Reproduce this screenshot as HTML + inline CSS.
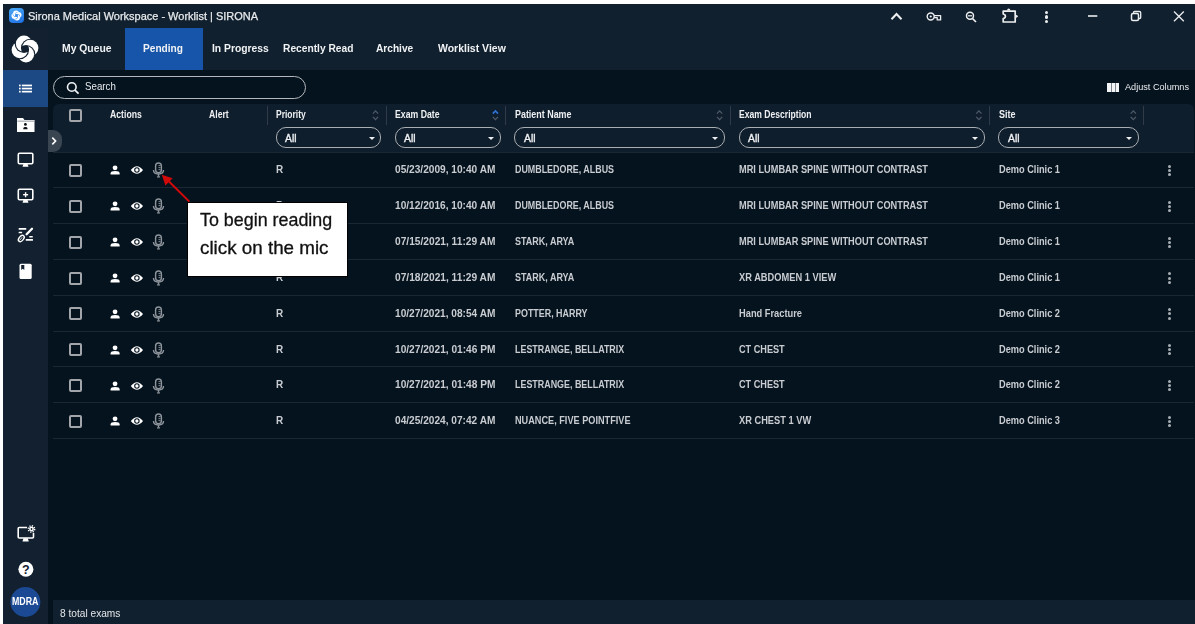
<!DOCTYPE html>
<html><head><meta charset="utf-8">
<style>
*{box-sizing:border-box;margin:0;padding:0}
html,body{width:1195px;height:624px;overflow:hidden;background:#ffffff;font-family:"Liberation Sans",sans-serif}
.a{position:absolute}
.t{position:absolute;white-space:nowrap;transform-origin:0 0;font-family:"Liberation Sans",sans-serif}
.cb{position:absolute;width:13px;height:13px;border:2px solid #a2a6ab;border-radius:2px}
.sep{position:absolute;top:106px;width:1.2px;height:19px;background:#303b47}
.pill{position:absolute;top:127.4px;height:20.8px;border:1.2px solid #a9aeb3;border-radius:10px}
.caret{position:absolute;top:137px;width:0;height:0;border-left:3px solid transparent;border-right:3px solid transparent;border-top:3px solid #eef0f2}
.div{position:absolute;left:53px;width:1141px;height:1px;background:#1b2734}
.kb{position:absolute;width:3px;height:3px;border-radius:50%;background:#a9aeb4}
</style></head><body>
<!-- app background -->
<div class="a" style="left:3px;top:4px;width:1192px;height:620px;background:#10202e"></div>
<!-- sidebar -->
<div class="a" style="left:3px;top:28px;width:45px;height:596px;background:#12202f"></div>
<!-- main -->
<div class="a" style="left:48px;top:70px;width:1147px;height:554px;background:#05131f"></div>
<!-- pending tab -->
<div class="a" style="left:125px;top:28px;width:78px;height:42px;background:#1755aa"></div>
<!-- sidebar active -->
<div class="a" style="left:3px;top:70px;width:45px;height:37px;background:#1c4984"></div>

<!-- title icon -->
<div class="a" style="left:8.5px;top:8.2px;width:15.2px;height:15.3px;border-radius:4px;background:linear-gradient(160deg,#4aaaf7,#1d6ee2)"></div>
<svg class="a" style="left:8.6px;top:8.4px" width="15" height="15" viewBox="0 0 28 28">
 <g fill="#fff" transform="translate(14 14) scale(0.7) translate(-14 -14)">
  <use href="#lp"/><use href="#lp" transform="rotate(90 14 14)"/><use href="#lp" transform="rotate(180 14 14)"/><use href="#lp" transform="rotate(270 14 14)"/>
 </g>
</svg>

<!-- nav logo -->
<svg class="a" style="left:11.4px;top:34.9px" width="28" height="28" viewBox="0 0 28 28">
 <defs>
  <mask id="lm" maskUnits="userSpaceOnUse" x="-10" y="-10" width="48" height="48"><rect x="-10" y="-10" width="48" height="48" fill="#fff"/><circle cx="19.25" cy="12.98" r="9.30" fill="#000"/></mask>
  <g id="lp"><circle cx="12.98" cy="8.75" r="8.15" mask="url(#lm)"/></g>
 </defs>
 <g fill="#fff">
  <use href="#lp"/><use href="#lp" transform="rotate(90 14 14)"/><use href="#lp" transform="rotate(180 14 14)"/><use href="#lp" transform="rotate(270 14 14)"/>
 </g>
</svg>

<!-- titlebar right icons -->
<svg class="a" style="left:880px;top:4px" width="315" height="24" viewBox="880 4 315 24" fill="none" stroke="#eceef0" stroke-width="1.8">
 <polyline points="891.5,19.3 896.5,14 901.5,19.3" stroke-width="2"/>
 <circle cx="930.7" cy="16.5" r="3.5" stroke-width="1.4"/><circle cx="930.7" cy="16.5" r="1.1" fill="#eceef0" stroke="none"/>
 <path d="M934,15.6 H940.6 V19.9 H937.2 V17.6 H934" stroke-width="1.3" stroke-linejoin="round"/>
 <circle cx="970" cy="15.8" r="3.5" stroke-width="1.5"/>
 <line x1="968" y1="15.8" x2="972" y2="15.8" stroke-width="1.2"/>
 <line x1="972.6" y1="18.6" x2="976" y2="22" stroke-width="1.6"/>
 <path d="M1003.2,11.1 H1015.2 V22 H1003.2 V18.6 Q1005.4,18.1 1005.4,16.3 Q1005.4,14.5 1003.2,14 Z" stroke-width="1.7" stroke-linejoin="round"/><path d="M1006.9,10.6 Q1007.3,8.4 1008.7,8.4 Q1010.1,8.4 1010.5,10.6 Z" fill="#eceef0" stroke="none"/><path d="M1015.6,14.7 Q1017.7,15.1 1017.7,16.35 Q1017.7,17.6 1015.6,18 Z" fill="#eceef0" stroke="none"/>
 <line x1="1088" y1="16" x2="1097.3" y2="16" stroke-width="1.6"/>
 <rect x="1131.5" y="13.5" width="7" height="7" rx="1.5" stroke-width="1.5"/>
 <path d="M1133.5,13 V12.5 Q1133.5,11.5 1134.5,11.5 H1139.5 Q1140.7,11.5 1140.7,12.7 V17.5 Q1140.7,18.5 1139.7,18.5 H1139" stroke-width="1.3"/>
 <line x1="1174" y1="11.5" x2="1183.8" y2="21.2" stroke-width="1.3"/>
 <line x1="1183.8" y1="11.5" x2="1174" y2="21.2" stroke-width="1.3"/>
</svg>
<div class="a" style="left:1044.8px;top:10.6px;width:3.3px;height:3.3px;border-radius:50%;background:#eceef0"></div>
<div class="a" style="left:1044.8px;top:15.3px;width:3.3px;height:3.3px;border-radius:50%;background:#eceef0"></div>
<div class="a" style="left:1044.8px;top:20px;width:3.3px;height:3.3px;border-radius:50%;background:#eceef0"></div>

<!-- sidebar icons -->
<svg class="a" style="left:3px;top:70px" width="45" height="554" viewBox="3 70 45 554">
 <g fill="#ffffff">
  <!-- list -->
  <rect x="19" y="84.6" width="1.7" height="1.7"/><rect x="21.8" y="84.6" width="10.2" height="1.7"/>
  <rect x="19" y="87.7" width="1.7" height="1.7"/><rect x="21.8" y="87.7" width="10.2" height="1.7"/>
  <rect x="19" y="90.8" width="1.7" height="1.7"/><rect x="21.8" y="90.8" width="10.2" height="1.7"/>
  <!-- folder person -->
  <path d="M17,118 H23 L24.5,120 H34.5 V132 H17 Z"/>
  <rect x="17.3" y="120.6" width="17" height="1.1" fill="#9ea4aa"/>
  <circle cx="25.4" cy="124.4" r="1.4" fill="#0a0f14"/>
  <path d="M23.3,129.2 V128.4 Q23.3,127.1 25.4,127.1 Q27.5,127.1 27.5,128.4 V129.2 Z" fill="#0a0f14"/>
  <!-- monitor -->
  <rect x="18.3" y="153.3" width="14.5" height="10.5" rx="1.2" fill="none" stroke="#fff" stroke-width="1.6"/>
  <path d="M23.5,164 H27.5 L28.5,166.8 H22.5 Z"/>
  <!-- monitor plus -->
  <rect x="18.3" y="189.3" width="14.5" height="10.5" rx="1.2" fill="none" stroke="#fff" stroke-width="1.6"/>
  <path d="M23.5,200 H27.5 L28.5,202.8 H22.5 Z"/>
  <rect x="24.9" y="192.2" width="1.4" height="5"/><rect x="23.1" y="194" width="5" height="1.4"/>
  <!-- edit lines -->
  <rect x="18.6" y="228.1" width="7.7" height="1.6" rx="0.5"/>
  <rect x="18.6" y="231.7" width="3.5" height="1.5" rx="0.5"/>
  <rect x="29.2" y="235.9" width="3.6" height="1.5" rx="0.5"/>
  <rect x="25.7" y="239.1" width="7.3" height="1.7" rx="0.5"/>
  <line x1="32" y1="228.8" x2="26.6" y2="234.3" stroke="#fff" stroke-width="2.3" stroke-linecap="round"/>
  <ellipse cx="21.3" cy="238.5" rx="2.2" ry="3.6" transform="rotate(40 21.3 238.5)" fill="none" stroke="#fff" stroke-width="1.4"/>
  <line x1="19.6" y1="240.4" x2="22.3" y2="237.2" stroke="#fff" stroke-width="0.8"/>
  <!-- book -->
  <rect x="19.5" y="263.7" width="12.2" height="15.3" rx="1.5"/>
  <path d="M21.2,265 H24.3 V270 L22.75,268.8 L21.2,270 Z" fill="#12202f"/>
  <!-- monitor settings -->
  <path d="M27,527.5 H19.2 Q18.2,527.5 18.2,528.5 V537 Q18.2,538 19.2,538 H32.5 Q33.5,538 33.5,537 V533" fill="none" stroke="#fff" stroke-width="1.6"/>
  <path d="M23.5,538.3 H27.8 L28.8,541.5 H22.5 Z"/>
  <circle cx="31.5" cy="529" r="2.4"/>
  <circle cx="31.5" cy="529" r="3.2" fill="none" stroke="#fff" stroke-width="1.4" stroke-dasharray="1.2 1.31"/>
  <circle cx="31.5" cy="529" r="0.9" fill="#12202f"/>
  <!-- help -->
  <circle cx="25.9" cy="569.2" r="7.5"/>
 </g>
 <text x="25.9" y="573.6" font-family="Liberation Sans" font-weight="bold" font-size="12.5" fill="#12202f" text-anchor="middle">?</text>
 <circle cx="25.4" cy="602" r="15" fill="#1b4994"/>
</svg>

<!-- search pill -->
<div class="a" style="left:53px;top:76px;width:253px;height:23px;border:1.6px solid #b4b8bc;border-radius:12px"></div>
<svg class="a" style="left:60px;top:78px" width="24" height="20" viewBox="60 78 24 20" fill="none" stroke="#f0f2f4">
 <circle cx="71.8" cy="87" r="4.3" stroke-width="1.6"/>
 <line x1="74.9" y1="90.1" x2="78.6" y2="93.6" stroke-width="1.8"/>
</svg>
<!-- adjust columns icon -->
<div class="a" style="left:1106.7px;top:82.5px;width:12.6px;height:9px;background:#f2f4f6"></div>
<div class="a" style="left:1110.5px;top:82.5px;width:1px;height:9px;background:#7b838c"></div>
<div class="a" style="left:1114.6px;top:82.5px;width:1px;height:9px;background:#7b838c"></div>

<!-- header -->
<div class="a" style="left:53px;top:104px;width:1141px;height:48px;background:#0f1e2d;border-radius:6px 6px 0 0"></div>
<div class="cb" style="left:68.5px;top:109px"></div>
<div class="sep" style="left:266.8px"></div>
<div class="sep" style="left:385.8px"></div>
<div class="sep" style="left:504.8px"></div>
<div class="sep" style="left:729.6px"></div>
<div class="sep" style="left:989px"></div>
<div class="sep" style="left:1143.2px"></div>
<svg class="a" style="left:360px;top:104px" width="800" height="24" viewBox="360 104 800 24" fill="none" stroke-width="1.3">
 <g stroke="#4f5a66">
  <polyline points="372.9,113.6 375.5,110.9 378.1,113.6"/><polyline points="372.9,116.9 375.5,119.6 378.1,116.9"/>
  <polyline points="717.0,113.6 719.6,110.9 722.2,113.6"/><polyline points="717.0,116.9 719.6,119.6 722.2,116.9"/>
  <polyline points="976.3,113.6 978.9,110.9 981.5,113.6"/><polyline points="976.3,116.9 978.9,119.6 981.5,116.9"/>
  <polyline points="1130.7,113.6 1133.3,110.9 1135.9,113.6"/><polyline points="1130.7,116.9 1133.3,119.6 1135.9,116.9"/>
  <polyline points="492.8,116.9 495.4,119.6 498,116.9"/>
 </g>
 <polyline points="492.8,113.6 495.4,110.9 498,113.6" stroke="#2f72d6" stroke-width="1.6"/>
</svg>
<div class="pill" style="left:276px;width:105px"></div><div class="caret" style="left:368.5px"></div>
<div class="pill" style="left:395px;width:105.5px"></div><div class="caret" style="left:487.5px"></div>
<div class="pill" style="left:514px;width:210.5px"></div><div class="caret" style="left:711.5px"></div>
<div class="pill" style="left:738.8px;width:246px"></div><div class="caret" style="left:971.5px"></div>
<div class="pill" style="left:998px;width:140.7px"></div><div class="caret" style="left:1125.5px"></div>
<!-- expand tab -->
<div class="a" style="left:48px;top:130px;width:13.6px;height:22px;background:#3a4552;border-radius:0 9px 9px 0"></div>
<svg class="a" style="left:48px;top:130px" width="14" height="22" viewBox="48 130 14 22" fill="none" stroke="#ffffff" stroke-width="1.6">
 <polyline points="52.3,137.6 55.6,141 52.3,144.4"/>
</svg>

<!-- rows -->
<div class="div" style="top:152px"></div>
<div class="div" style="top:187px"></div>
<div class="div" style="top:223px"></div>
<div class="div" style="top:259px"></div>
<div class="div" style="top:295px"></div>
<div class="div" style="top:331px"></div>
<div class="div" style="top:366px"></div>
<div class="div" style="top:402px"></div>
<div class="div" style="top:438px"></div>
<div class="cb" style="left:68.5px;top:164.00px"></div>
<div class="kb" style="left:1168px;top:164.80px"></div><div class="kb" style="left:1168px;top:168.90px"></div><div class="kb" style="left:1168px;top:173.10px"></div>
<svg class="a" style="left:105px;top:152.40px" width="65" height="36" viewBox="105 152.4 65 36"><g fill="#ffffff"><circle cx="115.05" cy="168.2" r="2.4"/><path d="M110.6,175 V173.6 Q110.6,171.3 115.1,171.3 Q119.6,171.3 119.6,173.6 V175 Z"/><path d="M130.8,170.4 Q136.9,162.8 143,170.4 Q136.9,178 130.8,170.4 Z"/></g><circle cx="136.9" cy="170.4" r="2.2" fill="none" stroke="#05131f" stroke-width="1.1"/><g fill="none" stroke="#8e949b" stroke-width="1.4"><rect x="155.6" y="163.4" width="5.8" height="9.6" rx="2.9"/><path d="M153.5,170.5 Q153.5,174.4 158.5,174.4 Q163.5,174.4 163.5,170.5"/><line x1="158.5" y1="174.4" x2="158.5" y2="177"/></g><g stroke="#8e949b" stroke-width="0.9"><line x1="158.5" y1="166" x2="160.5" y2="166"/><line x1="158.5" y1="168" x2="160.5" y2="168"/><line x1="158.5" y1="170" x2="160.5" y2="170"/><line x1="157" y1="177.3" x2="160" y2="177.3" stroke-width="1.2"/></g></svg>
<div class="cb" style="left:68.5px;top:199.87px"></div>
<div class="kb" style="left:1168px;top:200.67px"></div><div class="kb" style="left:1168px;top:204.77px"></div><div class="kb" style="left:1168px;top:208.97px"></div>
<svg class="a" style="left:105px;top:188.27px" width="65" height="36" viewBox="105 152.4 65 36"><g fill="#ffffff"><circle cx="115.05" cy="168.2" r="2.4"/><path d="M110.6,175 V173.6 Q110.6,171.3 115.1,171.3 Q119.6,171.3 119.6,173.6 V175 Z"/><path d="M130.8,170.4 Q136.9,162.8 143,170.4 Q136.9,178 130.8,170.4 Z"/></g><circle cx="136.9" cy="170.4" r="2.2" fill="none" stroke="#05131f" stroke-width="1.1"/><g fill="none" stroke="#8e949b" stroke-width="1.4"><rect x="155.6" y="163.4" width="5.8" height="9.6" rx="2.9"/><path d="M153.5,170.5 Q153.5,174.4 158.5,174.4 Q163.5,174.4 163.5,170.5"/><line x1="158.5" y1="174.4" x2="158.5" y2="177"/></g><g stroke="#8e949b" stroke-width="0.9"><line x1="158.5" y1="166" x2="160.5" y2="166"/><line x1="158.5" y1="168" x2="160.5" y2="168"/><line x1="158.5" y1="170" x2="160.5" y2="170"/><line x1="157" y1="177.3" x2="160" y2="177.3" stroke-width="1.2"/></g></svg>
<div class="cb" style="left:68.5px;top:235.74px"></div>
<div class="kb" style="left:1168px;top:236.54px"></div><div class="kb" style="left:1168px;top:240.64px"></div><div class="kb" style="left:1168px;top:244.84px"></div>
<svg class="a" style="left:105px;top:224.14px" width="65" height="36" viewBox="105 152.4 65 36"><g fill="#ffffff"><circle cx="115.05" cy="168.2" r="2.4"/><path d="M110.6,175 V173.6 Q110.6,171.3 115.1,171.3 Q119.6,171.3 119.6,173.6 V175 Z"/><path d="M130.8,170.4 Q136.9,162.8 143,170.4 Q136.9,178 130.8,170.4 Z"/></g><circle cx="136.9" cy="170.4" r="2.2" fill="none" stroke="#05131f" stroke-width="1.1"/><g fill="none" stroke="#8e949b" stroke-width="1.4"><rect x="155.6" y="163.4" width="5.8" height="9.6" rx="2.9"/><path d="M153.5,170.5 Q153.5,174.4 158.5,174.4 Q163.5,174.4 163.5,170.5"/><line x1="158.5" y1="174.4" x2="158.5" y2="177"/></g><g stroke="#8e949b" stroke-width="0.9"><line x1="158.5" y1="166" x2="160.5" y2="166"/><line x1="158.5" y1="168" x2="160.5" y2="168"/><line x1="158.5" y1="170" x2="160.5" y2="170"/><line x1="157" y1="177.3" x2="160" y2="177.3" stroke-width="1.2"/></g></svg>
<div class="cb" style="left:68.5px;top:271.61px"></div>
<div class="kb" style="left:1168px;top:272.41px"></div><div class="kb" style="left:1168px;top:276.51px"></div><div class="kb" style="left:1168px;top:280.71px"></div>
<svg class="a" style="left:105px;top:260.01px" width="65" height="36" viewBox="105 152.4 65 36"><g fill="#ffffff"><circle cx="115.05" cy="168.2" r="2.4"/><path d="M110.6,175 V173.6 Q110.6,171.3 115.1,171.3 Q119.6,171.3 119.6,173.6 V175 Z"/><path d="M130.8,170.4 Q136.9,162.8 143,170.4 Q136.9,178 130.8,170.4 Z"/></g><circle cx="136.9" cy="170.4" r="2.2" fill="none" stroke="#05131f" stroke-width="1.1"/><g fill="none" stroke="#8e949b" stroke-width="1.4"><rect x="155.6" y="163.4" width="5.8" height="9.6" rx="2.9"/><path d="M153.5,170.5 Q153.5,174.4 158.5,174.4 Q163.5,174.4 163.5,170.5"/><line x1="158.5" y1="174.4" x2="158.5" y2="177"/></g><g stroke="#8e949b" stroke-width="0.9"><line x1="158.5" y1="166" x2="160.5" y2="166"/><line x1="158.5" y1="168" x2="160.5" y2="168"/><line x1="158.5" y1="170" x2="160.5" y2="170"/><line x1="157" y1="177.3" x2="160" y2="177.3" stroke-width="1.2"/></g></svg>
<div class="cb" style="left:68.5px;top:307.48px"></div>
<div class="kb" style="left:1168px;top:308.28px"></div><div class="kb" style="left:1168px;top:312.38px"></div><div class="kb" style="left:1168px;top:316.58px"></div>
<svg class="a" style="left:105px;top:295.88px" width="65" height="36" viewBox="105 152.4 65 36"><g fill="#ffffff"><circle cx="115.05" cy="168.2" r="2.4"/><path d="M110.6,175 V173.6 Q110.6,171.3 115.1,171.3 Q119.6,171.3 119.6,173.6 V175 Z"/><path d="M130.8,170.4 Q136.9,162.8 143,170.4 Q136.9,178 130.8,170.4 Z"/></g><circle cx="136.9" cy="170.4" r="2.2" fill="none" stroke="#05131f" stroke-width="1.1"/><g fill="none" stroke="#8e949b" stroke-width="1.4"><rect x="155.6" y="163.4" width="5.8" height="9.6" rx="2.9"/><path d="M153.5,170.5 Q153.5,174.4 158.5,174.4 Q163.5,174.4 163.5,170.5"/><line x1="158.5" y1="174.4" x2="158.5" y2="177"/></g><g stroke="#8e949b" stroke-width="0.9"><line x1="158.5" y1="166" x2="160.5" y2="166"/><line x1="158.5" y1="168" x2="160.5" y2="168"/><line x1="158.5" y1="170" x2="160.5" y2="170"/><line x1="157" y1="177.3" x2="160" y2="177.3" stroke-width="1.2"/></g></svg>
<div class="cb" style="left:68.5px;top:343.35px"></div>
<div class="kb" style="left:1168px;top:344.15px"></div><div class="kb" style="left:1168px;top:348.25px"></div><div class="kb" style="left:1168px;top:352.45px"></div>
<svg class="a" style="left:105px;top:331.75px" width="65" height="36" viewBox="105 152.4 65 36"><g fill="#ffffff"><circle cx="115.05" cy="168.2" r="2.4"/><path d="M110.6,175 V173.6 Q110.6,171.3 115.1,171.3 Q119.6,171.3 119.6,173.6 V175 Z"/><path d="M130.8,170.4 Q136.9,162.8 143,170.4 Q136.9,178 130.8,170.4 Z"/></g><circle cx="136.9" cy="170.4" r="2.2" fill="none" stroke="#05131f" stroke-width="1.1"/><g fill="none" stroke="#8e949b" stroke-width="1.4"><rect x="155.6" y="163.4" width="5.8" height="9.6" rx="2.9"/><path d="M153.5,170.5 Q153.5,174.4 158.5,174.4 Q163.5,174.4 163.5,170.5"/><line x1="158.5" y1="174.4" x2="158.5" y2="177"/></g><g stroke="#8e949b" stroke-width="0.9"><line x1="158.5" y1="166" x2="160.5" y2="166"/><line x1="158.5" y1="168" x2="160.5" y2="168"/><line x1="158.5" y1="170" x2="160.5" y2="170"/><line x1="157" y1="177.3" x2="160" y2="177.3" stroke-width="1.2"/></g></svg>
<div class="cb" style="left:68.5px;top:379.22px"></div>
<div class="kb" style="left:1168px;top:380.02px"></div><div class="kb" style="left:1168px;top:384.12px"></div><div class="kb" style="left:1168px;top:388.32px"></div>
<svg class="a" style="left:105px;top:367.62px" width="65" height="36" viewBox="105 152.4 65 36"><g fill="#ffffff"><circle cx="115.05" cy="168.2" r="2.4"/><path d="M110.6,175 V173.6 Q110.6,171.3 115.1,171.3 Q119.6,171.3 119.6,173.6 V175 Z"/><path d="M130.8,170.4 Q136.9,162.8 143,170.4 Q136.9,178 130.8,170.4 Z"/></g><circle cx="136.9" cy="170.4" r="2.2" fill="none" stroke="#05131f" stroke-width="1.1"/><g fill="none" stroke="#8e949b" stroke-width="1.4"><rect x="155.6" y="163.4" width="5.8" height="9.6" rx="2.9"/><path d="M153.5,170.5 Q153.5,174.4 158.5,174.4 Q163.5,174.4 163.5,170.5"/><line x1="158.5" y1="174.4" x2="158.5" y2="177"/></g><g stroke="#8e949b" stroke-width="0.9"><line x1="158.5" y1="166" x2="160.5" y2="166"/><line x1="158.5" y1="168" x2="160.5" y2="168"/><line x1="158.5" y1="170" x2="160.5" y2="170"/><line x1="157" y1="177.3" x2="160" y2="177.3" stroke-width="1.2"/></g></svg>
<div class="cb" style="left:68.5px;top:415.09px"></div>
<div class="kb" style="left:1168px;top:415.89px"></div><div class="kb" style="left:1168px;top:419.99px"></div><div class="kb" style="left:1168px;top:424.19px"></div>
<svg class="a" style="left:105px;top:403.49px" width="65" height="36" viewBox="105 152.4 65 36"><g fill="#ffffff"><circle cx="115.05" cy="168.2" r="2.4"/><path d="M110.6,175 V173.6 Q110.6,171.3 115.1,171.3 Q119.6,171.3 119.6,173.6 V175 Z"/><path d="M130.8,170.4 Q136.9,162.8 143,170.4 Q136.9,178 130.8,170.4 Z"/></g><circle cx="136.9" cy="170.4" r="2.2" fill="none" stroke="#05131f" stroke-width="1.1"/><g fill="none" stroke="#8e949b" stroke-width="1.4"><rect x="155.6" y="163.4" width="5.8" height="9.6" rx="2.9"/><path d="M153.5,170.5 Q153.5,174.4 158.5,174.4 Q163.5,174.4 163.5,170.5"/><line x1="158.5" y1="174.4" x2="158.5" y2="177"/></g><g stroke="#8e949b" stroke-width="0.9"><line x1="158.5" y1="166" x2="160.5" y2="166"/><line x1="158.5" y1="168" x2="160.5" y2="168"/><line x1="158.5" y1="170" x2="160.5" y2="170"/><line x1="157" y1="177.3" x2="160" y2="177.3" stroke-width="1.2"/></g></svg>

<!-- footer -->
<div class="a" style="left:53px;top:600px;width:1142px;height:24px;background:#10202e"></div>

<div class="t" id="t0" style="left:28.00px;top:11.27px;font-size:11.5px;line-height:11.5px;font-weight:normal;color:#e8eaec;transform:scaleX(0.9546);-webkit-text-stroke:0.25px #e8eaec;">Sirona Medical Workspace - Worklist | SIRONA</div>
<div class="t" id="t1" style="left:61.60px;top:42.93px;font-size:11.3px;line-height:11.3px;font-weight:bold;color:#f0f2f4;transform:scaleX(0.9185);">My Queue</div>
<div class="t" id="t2" style="left:143.40px;top:42.93px;font-size:11.3px;line-height:11.3px;font-weight:bold;color:#f0f2f4;transform:scaleX(0.8976);">Pending</div>
<div class="t" id="t3" style="left:212.20px;top:42.93px;font-size:11.3px;line-height:11.3px;font-weight:bold;color:#f0f2f4;transform:scaleX(0.9122);">In Progress</div>
<div class="t" id="t4" style="left:282.60px;top:42.93px;font-size:11.3px;line-height:11.3px;font-weight:bold;color:#f0f2f4;transform:scaleX(0.9042);">Recently Read</div>
<div class="t" id="t5" style="left:376.40px;top:42.93px;font-size:11.3px;line-height:11.3px;font-weight:bold;color:#f0f2f4;transform:scaleX(0.8974);">Archive</div>
<div class="t" id="t6" style="left:438.30px;top:42.93px;font-size:11.3px;line-height:11.3px;font-weight:bold;color:#f0f2f4;transform:scaleX(0.9282);">Worklist View</div>
<div class="t" id="t7" style="left:85.00px;top:82.08px;font-size:10.3px;line-height:10.3px;font-weight:normal;color:#e8eaed;transform:scaleX(0.9436);">Search</div>
<div class="t" id="t8" style="left:1125.00px;top:82.10px;font-size:9.8px;line-height:9.8px;font-weight:normal;color:#e8eaed;transform:scaleX(0.9328);">Adjust Columns</div>
<div class="t" id="t9" style="left:109.60px;top:109.78px;font-size:10.3px;line-height:10.3px;font-weight:bold;color:#eef0f2;transform:scaleX(0.8420);">Actions</div>
<div class="t" id="t10" style="left:209.00px;top:109.78px;font-size:10.3px;line-height:10.3px;font-weight:bold;color:#eef0f2;transform:scaleX(0.8394);">Alert</div>
<div class="t" id="t11" style="left:276.00px;top:109.78px;font-size:10.3px;line-height:10.3px;font-weight:bold;color:#eef0f2;transform:scaleX(0.8263);">Priority</div>
<div class="t" id="t12" style="left:395.00px;top:109.78px;font-size:10.3px;line-height:10.3px;font-weight:bold;color:#eef0f2;transform:scaleX(0.8451);">Exam Date</div>
<div class="t" id="t13" style="left:514.50px;top:109.78px;font-size:10.3px;line-height:10.3px;font-weight:bold;color:#eef0f2;transform:scaleX(0.8659);">Patient Name</div>
<div class="t" id="t14" style="left:739.00px;top:109.78px;font-size:10.3px;line-height:10.3px;font-weight:bold;color:#eef0f2;transform:scaleX(0.8335);">Exam Description</div>
<div class="t" id="t15" style="left:998.50px;top:109.78px;font-size:10.3px;line-height:10.3px;font-weight:bold;color:#eef0f2;transform:scaleX(0.8734);">Site</div>
<div class="t" id="t16" style="left:285.00px;top:133.11px;font-size:10.5px;line-height:10.5px;font-weight:normal;color:#eef0f2;transform:scaleX(0.9853);-webkit-text-stroke:0.35px #eef0f2;">All</div>
<div class="t" id="t17" style="left:404.00px;top:133.11px;font-size:10.5px;line-height:10.5px;font-weight:normal;color:#eef0f2;transform:scaleX(0.9853);-webkit-text-stroke:0.35px #eef0f2;">All</div>
<div class="t" id="t18" style="left:523.50px;top:133.11px;font-size:10.5px;line-height:10.5px;font-weight:normal;color:#eef0f2;transform:scaleX(0.9853);-webkit-text-stroke:0.35px #eef0f2;">All</div>
<div class="t" id="t19" style="left:748.00px;top:133.11px;font-size:10.5px;line-height:10.5px;font-weight:normal;color:#eef0f2;transform:scaleX(0.9853);-webkit-text-stroke:0.35px #eef0f2;">All</div>
<div class="t" id="t20" style="left:1007.50px;top:133.11px;font-size:10.5px;line-height:10.5px;font-weight:normal;color:#eef0f2;transform:scaleX(0.9853);-webkit-text-stroke:0.35px #eef0f2;">All</div>
<div class="t" id="t21" style="left:276.00px;top:164.23px;font-size:10.6px;line-height:10.6px;font-weight:bold;color:#c9ccd0;transform:scaleX(0.9404);">R</div>
<div class="t" id="t22" style="left:395.00px;top:164.23px;font-size:10.6px;line-height:10.6px;font-weight:bold;color:#c9ccd0;transform:scaleX(0.9559);">05/23/2009, 10:40 AM</div>
<div class="t" id="t23" style="left:514.70px;top:164.23px;font-size:10.6px;line-height:10.6px;font-weight:bold;color:#c9ccd0;transform:scaleX(0.8397);">DUMBLEDORE, ALBUS</div>
<div class="t" id="t24" style="left:738.80px;top:164.23px;font-size:10.6px;line-height:10.6px;font-weight:bold;color:#c9ccd0;transform:scaleX(0.8703);">MRI LUMBAR SPINE WITHOUT CONTRAST</div>
<div class="t" id="t25" style="left:998.60px;top:164.23px;font-size:10.6px;line-height:10.6px;font-weight:bold;color:#c9ccd0;transform:scaleX(0.8707);">Demo Clinic 1</div>
<div class="t" id="t26" style="left:276.00px;top:200.10px;font-size:10.6px;line-height:10.6px;font-weight:bold;color:#c9ccd0;transform:scaleX(0.9404);">R</div>
<div class="t" id="t27" style="left:395.00px;top:200.10px;font-size:10.6px;line-height:10.6px;font-weight:bold;color:#c9ccd0;transform:scaleX(0.9559);">10/12/2016, 10:40 AM</div>
<div class="t" id="t28" style="left:514.70px;top:200.10px;font-size:10.6px;line-height:10.6px;font-weight:bold;color:#c9ccd0;transform:scaleX(0.8397);">DUMBLEDORE, ALBUS</div>
<div class="t" id="t29" style="left:738.80px;top:200.10px;font-size:10.6px;line-height:10.6px;font-weight:bold;color:#c9ccd0;transform:scaleX(0.8703);">MRI LUMBAR SPINE WITHOUT CONTRAST</div>
<div class="t" id="t30" style="left:998.60px;top:200.10px;font-size:10.6px;line-height:10.6px;font-weight:bold;color:#c9ccd0;transform:scaleX(0.8707);">Demo Clinic 1</div>
<div class="t" id="t31" style="left:276.00px;top:235.97px;font-size:10.6px;line-height:10.6px;font-weight:bold;color:#c9ccd0;transform:scaleX(0.9404);">R</div>
<div class="t" id="t32" style="left:395.00px;top:235.97px;font-size:10.6px;line-height:10.6px;font-weight:bold;color:#c9ccd0;transform:scaleX(0.9612);">07/15/2021, 11:29 AM</div>
<div class="t" id="t33" style="left:514.70px;top:235.97px;font-size:10.6px;line-height:10.6px;font-weight:bold;color:#c9ccd0;transform:scaleX(0.8488);">STARK, ARYA</div>
<div class="t" id="t34" style="left:738.80px;top:235.97px;font-size:10.6px;line-height:10.6px;font-weight:bold;color:#c9ccd0;transform:scaleX(0.8703);">MRI LUMBAR SPINE WITHOUT CONTRAST</div>
<div class="t" id="t35" style="left:998.60px;top:235.97px;font-size:10.6px;line-height:10.6px;font-weight:bold;color:#c9ccd0;transform:scaleX(0.8707);">Demo Clinic 1</div>
<div class="t" id="t36" style="left:276.00px;top:271.84px;font-size:10.6px;line-height:10.6px;font-weight:bold;color:#c9ccd0;transform:scaleX(0.9404);">R</div>
<div class="t" id="t37" style="left:395.00px;top:271.84px;font-size:10.6px;line-height:10.6px;font-weight:bold;color:#c9ccd0;transform:scaleX(0.9612);">07/18/2021, 11:29 AM</div>
<div class="t" id="t38" style="left:514.70px;top:271.84px;font-size:10.6px;line-height:10.6px;font-weight:bold;color:#c9ccd0;transform:scaleX(0.8488);">STARK, ARYA</div>
<div class="t" id="t39" style="left:738.80px;top:271.84px;font-size:10.6px;line-height:10.6px;font-weight:bold;color:#c9ccd0;transform:scaleX(0.8768);">XR ABDOMEN 1 VIEW</div>
<div class="t" id="t40" style="left:998.60px;top:271.84px;font-size:10.6px;line-height:10.6px;font-weight:bold;color:#c9ccd0;transform:scaleX(0.8707);">Demo Clinic 1</div>
<div class="t" id="t41" style="left:276.00px;top:307.71px;font-size:10.6px;line-height:10.6px;font-weight:bold;color:#c9ccd0;transform:scaleX(0.9404);">R</div>
<div class="t" id="t42" style="left:395.00px;top:307.71px;font-size:10.6px;line-height:10.6px;font-weight:bold;color:#c9ccd0;transform:scaleX(0.9559);">10/27/2021, 08:54 AM</div>
<div class="t" id="t43" style="left:514.70px;top:307.71px;font-size:10.6px;line-height:10.6px;font-weight:bold;color:#c9ccd0;transform:scaleX(0.8416);">POTTER, HARRY</div>
<div class="t" id="t44" style="left:738.80px;top:307.71px;font-size:10.6px;line-height:10.6px;font-weight:bold;color:#c9ccd0;transform:scaleX(0.8771);">Hand Fracture</div>
<div class="t" id="t45" style="left:998.60px;top:307.71px;font-size:10.6px;line-height:10.6px;font-weight:bold;color:#c9ccd0;transform:scaleX(0.8707);">Demo Clinic 2</div>
<div class="t" id="t46" style="left:276.00px;top:343.58px;font-size:10.6px;line-height:10.6px;font-weight:bold;color:#c9ccd0;transform:scaleX(0.9404);">R</div>
<div class="t" id="t47" style="left:395.00px;top:343.58px;font-size:10.6px;line-height:10.6px;font-weight:bold;color:#c9ccd0;transform:scaleX(0.9576);">10/27/2021, 01:46 PM</div>
<div class="t" id="t48" style="left:514.70px;top:343.58px;font-size:10.6px;line-height:10.6px;font-weight:bold;color:#c9ccd0;transform:scaleX(0.8408);">LESTRANGE, BELLATRIX</div>
<div class="t" id="t49" style="left:738.80px;top:343.58px;font-size:10.6px;line-height:10.6px;font-weight:bold;color:#c9ccd0;transform:scaleX(0.8628);">CT CHEST</div>
<div class="t" id="t50" style="left:998.60px;top:343.58px;font-size:10.6px;line-height:10.6px;font-weight:bold;color:#c9ccd0;transform:scaleX(0.8707);">Demo Clinic 2</div>
<div class="t" id="t51" style="left:276.00px;top:379.45px;font-size:10.6px;line-height:10.6px;font-weight:bold;color:#c9ccd0;transform:scaleX(0.9404);">R</div>
<div class="t" id="t52" style="left:395.00px;top:379.45px;font-size:10.6px;line-height:10.6px;font-weight:bold;color:#c9ccd0;transform:scaleX(0.9576);">10/27/2021, 01:48 PM</div>
<div class="t" id="t53" style="left:514.70px;top:379.45px;font-size:10.6px;line-height:10.6px;font-weight:bold;color:#c9ccd0;transform:scaleX(0.8408);">LESTRANGE, BELLATRIX</div>
<div class="t" id="t54" style="left:738.80px;top:379.45px;font-size:10.6px;line-height:10.6px;font-weight:bold;color:#c9ccd0;transform:scaleX(0.8628);">CT CHEST</div>
<div class="t" id="t55" style="left:998.60px;top:379.45px;font-size:10.6px;line-height:10.6px;font-weight:bold;color:#c9ccd0;transform:scaleX(0.8707);">Demo Clinic 2</div>
<div class="t" id="t56" style="left:276.00px;top:415.32px;font-size:10.6px;line-height:10.6px;font-weight:bold;color:#c9ccd0;transform:scaleX(0.9404);">R</div>
<div class="t" id="t57" style="left:395.00px;top:415.32px;font-size:10.6px;line-height:10.6px;font-weight:bold;color:#c9ccd0;transform:scaleX(0.9559);">04/25/2024, 07:42 AM</div>
<div class="t" id="t58" style="left:514.70px;top:415.32px;font-size:10.6px;line-height:10.6px;font-weight:bold;color:#c9ccd0;transform:scaleX(0.8644);">NUANCE, FIVE POINTFIVE</div>
<div class="t" id="t59" style="left:738.80px;top:415.32px;font-size:10.6px;line-height:10.6px;font-weight:bold;color:#c9ccd0;transform:scaleX(0.8760);">XR CHEST 1 VW</div>
<div class="t" id="t60" style="left:998.60px;top:415.32px;font-size:10.6px;line-height:10.6px;font-weight:bold;color:#c9ccd0;transform:scaleX(0.8707);">Demo Clinic 3</div>
<div class="t" id="t61" style="left:60.40px;top:609.28px;font-size:10.3px;line-height:10.3px;font-weight:normal;color:#e4e6e9;transform:scaleX(0.9861);">8 total exams</div>
<div class="t" id="t64" style="left:12.40px;top:596.97px;font-size:10.2px;line-height:10.2px;font-weight:bold;color:#ffffff;transform:scaleX(0.8638);">MDRA</div>

<!-- callout -->
<svg class="a" style="left:150px;top:160px" width="60" height="60" viewBox="150 160 60 60">
 <line x1="189.3" y1="201.6" x2="168" y2="180.5" stroke="#d20a0a" stroke-width="2"/>
 <path d="M161.8,174.8 L172.6,178.2 L165.4,185.6 Z" fill="#d20a0a"/>
</svg>
<div class="a" style="left:187.8px;top:202.7px;width:159.6px;height:73px;background:#ffffff;box-shadow:0 0 0 1px #000"></div>
<div class="t" id="t62" style="left:199.50px;top:212.22px;font-size:17.7px;line-height:17.7px;font-weight:normal;color:#111111;transform:scaleX(1.0107);-webkit-text-stroke:0.3px #111;">To begin reading</div>
<div class="t" id="t63" style="left:199.50px;top:240.22px;font-size:17.7px;line-height:17.7px;font-weight:normal;color:#111111;transform:scaleX(1.0628);-webkit-text-stroke:0.3px #111;">click on the mic</div>
</body></html>
